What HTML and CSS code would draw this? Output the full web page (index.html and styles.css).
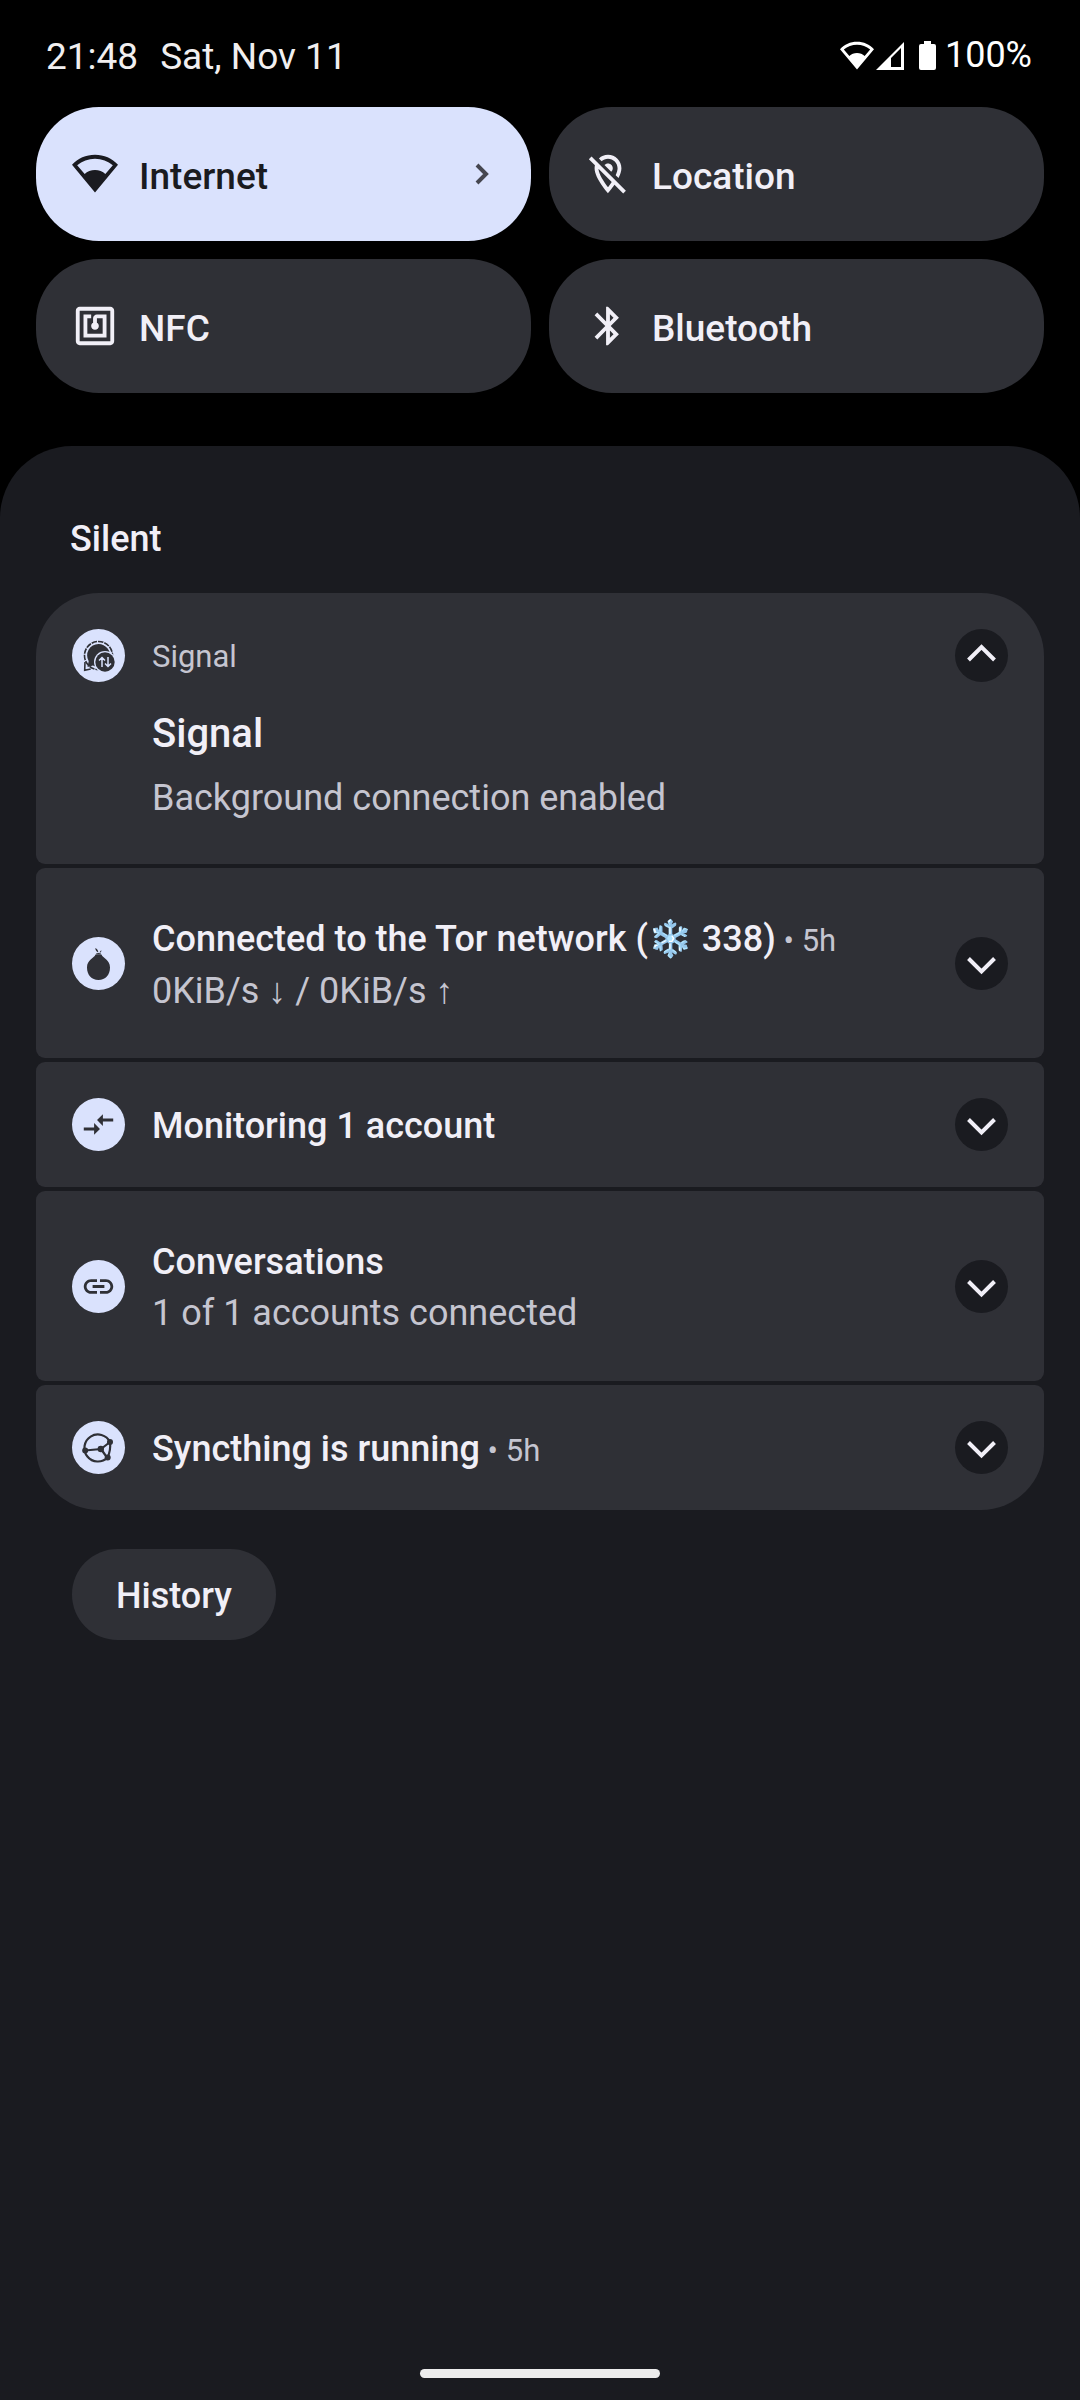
FILE: index.html
```html
<!DOCTYPE html>
<html lang="en">
<head>
<meta charset="utf-8">
<meta name="viewport" content="width=device-width, initial-scale=1">
<title>Notifications</title>
<link rel="stylesheet" href="styles.css">
</head>
<body>
<svg class="defs" aria-hidden="true">
  <symbol id="wifi" viewBox="0 0 24 24"><path fill-rule="evenodd" d="M12 2C7.3 2 3.1 3.9 0 7.2l12 14.4L24 7.200C20.900 3.900 16.700 2 12 2zM2.700 7.400C5.300 5.300 8.500 4.100 12 4.100s6.700 1.200 9.300 3.300l-3.900 4.600C16 10.600 14.100 9.900 12 9.900s-4 .7-5.400 2.100z"/></symbol>
  <symbol id="down" viewBox="0 0 53 53"><path d="M13.500 21.500l13 13 13-13" fill="none" stroke="currentColor" stroke-width="4"/></symbol>
</svg>

<header class="status">
  <div class="when"><time>21:48</time><span>Sat, Nov 11</span></div>
  <div class="signals">
    <svg class="status-wifi" aria-label="Wi-Fi"><use href="#wifi"/></svg>
    <svg class="status-cell" viewBox="0 0 28 28" aria-label="Mobile signal"><path fill-rule="evenodd" d="M0 28L28 0v28zM15 16v9h10V6z"/></svg>
    <svg class="status-battery" viewBox="0 0 17 29" aria-label="Battery"><path d="M5 0h7v3h3a2 2 0 0 1 2 2v22a2 2 0 0 1-2 2H2a2 2 0 0 1-2-2V5a2 2 0 0 1 2-2h3z"/></svg>
    <span>100%</span>
  </div>
</header>

<section class="tiles" aria-label="Quick settings">
  <button class="tile tile-on" type="button">
    <svg class="tile-icon"><use href="#wifi"/></svg>
    <span class="tile-label">Internet</span>
    <svg class="tile-chevron" viewBox="0 0 14 22"><path d="M2 2l9 9-9 9" fill="none" stroke="currentColor" stroke-width="4"/></svg>
  </button>
  <button class="tile" type="button">
    <svg class="tile-icon" viewBox="0 0 24 24"><path d="M12 4c2.760 0 5 2.240 5 5 0 1.060-.39 2.320-1 3.620l1.490 1.490C18.370 12.360 19 10.570 19 9c0-3.870-3.130-7-7-7-1.840 0-3.500.71-4.750 1.860l1.430 1.430C9.560 4.500 10.720 4 12 4zM14.500 9c0-1.380-1.120-2.500-2.500-2.500-.74 0-1.390.33-1.850.83l3.520 3.520c.51-.46.83-1.110.83-1.850zM3.410 2.860L2 4.270l3.180 3.180C5.070 7.950 5 8.470 5 9c0 5.250 7 13 7 13s1.670-1.850 3.380-4.350l4.550 4.550 1.410-1.410zM12 18.880c-2.010-2.580-4.800-6.740-4.980-9.590l6.920 6.920c-.65.98-1.330 1.890-1.940 2.670z"/></svg>
    <span class="tile-label">Location</span>
  </button>
  <button class="tile" type="button">
    <svg class="tile-icon" viewBox="0 0 24 24"><path d="M20 2H4c-1.100 0-2 .9-2 2v16c0 1.100.9 2 2 2h16c1.100 0 2-.9 2-2V4c0-1.100-.9-2-2-2zm0 18H4V4h16v16zM18 6h-5c-1.100 0-2 .9-2 2v2.280c-.6.35-1 .98-1 1.720 0 1.100.9 2 2 2s2-.9 2-2c0-.74-.4-1.380-1-1.720V8h3v8H8V8h2V6H6v12h12V6z"/></svg>
    <span class="tile-label">NFC</span>
  </button>
  <button class="tile" type="button">
    <svg class="tile-icon" viewBox="0 0 24 24"><path d="M17.710 7.710L12 2h-1v7.590L6.410 5 5 6.410 10.590 12 5 17.590 6.410 19 11 14.410V22h1l5.710-5.710-4.300-4.290 4.300-4.290zM13 5.830l1.880 1.880L13 9.590V5.830zm1.880 10.460L13 18.170v-3.760l1.880 1.880z"/></svg>
    <span class="tile-label">Bluetooth</span>
  </button>
</section>

<main class="sheet">
  <h1 class="section-title">Silent</h1>
  <div class="cards">
    <article class="card card-open">
      <svg class="badge" viewBox="0 0 53 53">
        <circle cx="26.500" cy="26.500" r="14" fill="none" stroke="currentColor" stroke-width="1.600" stroke-dasharray="5.500 1"/>
        <path d="M13 33l-.3 8.200 6-1.200" fill="none" stroke="currentColor" stroke-width="1.600"/>
        <path d="M26.500 15a11.500 11.500 0 1 1-5.600 21.500l-5.400 1.400 1.200-5.600A11.500 11.500 0 0 1 26.500 15z"/>
        <circle class="badge-cut" cx="33" cy="33" r="11"/>
        <circle cx="33" cy="33" r="9.700"/>
        <path class="badge-line" d="M30 38V28.500M27 31.500l3-3 3 3M36 28v9.500M33 34.500l3 3 3-3"/>
      </svg>
      <span class="app-name">Signal</span>
      <button class="expand" type="button" aria-label="Collapse"><svg viewBox="0 0 53 53"><path d="M13.500 31l13-13 13 13" fill="none" stroke="currentColor" stroke-width="4"/></svg></button>
      <div class="card-body">
        <h2 class="big-title">Signal</h2>
        <p class="text">Background connection enabled</p>
      </div>
    </article>

    <article class="card card-tall">
      <svg class="badge" viewBox="0 0 53 53"><path d="M23.500 17.500h6c1.500 4 8.500 5 8.500 13 0 7.500-4.500 12.500-11.500 12.500S15 38 15 30.500c0-8 7-9 8.500-13zM24 16.500c1.500-.8 3.500-.8 5 0l-.3.700h-4.400zM23.300 11c1.800.8 3 2.300 3 4.500-1.800-.6-3-2.300-3-4.500zM29.300 13l-1.900 2.500 1.700-.3z"/></svg>
      <div class="card-text">
        <h2 class="title">Connected to the Tor network (❄️ 338)<span class="age"> • 5h</span></h2>
        <p class="text">0KiB/s ↓ / 0KiB/s ↑</p>
      </div>
      <button class="expand" type="button" aria-label="Expand"><svg><use href="#down"/></svg></button>
    </article>

    <article class="card">
      <svg class="badge" viewBox="-6 -6 36 36"><path d="M9.010 14H2v2h7.010v3L13 15l-3.990-4v3zm5.980-1v-3H22V8h-7.010V5L11 9l3.990 4z"/></svg>
      <div class="card-text"><h2 class="title">Monitoring 1 account</h2></div>
      <button class="expand" type="button" aria-label="Expand"><svg><use href="#down"/></svg></button>
    </article>

    <article class="card card-tall">
      <svg class="badge" viewBox="-6 -6 36 36"><path d="M3.900 12c0-1.710 1.390-3.100 3.100-3.100h4V7H7c-2.760 0-5 2.240-5 5s2.240 5 5 5h4v-1.900H7c-1.710 0-3.100-1.390-3.100-3.100zM8 13h8v-2H8v2zm9-6h-4v1.900h4c1.710 0 3.100 1.390 3.100 3.100s-1.390 3.100-3.100 3.100h-4V17h4c2.760 0 5-2.240 5-5s-2.240-5-5-5z"/></svg>
      <div class="card-text">
        <h2 class="title">Conversations</h2>
        <p class="text">1 of 1 accounts connected</p>
      </div>
      <button class="expand" type="button" aria-label="Expand"><svg><use href="#down"/></svg></button>
    </article>

    <article class="card">
      <svg class="badge" viewBox="0 0 53 53">
        <path d="M38 21A13.500 13.500 0 1 0 35.500 36.500 28 28 0 0 0 38 21M13 29.500l16-1.500 9-7M29 28l6 8.500" fill="none" stroke="currentColor" stroke-width="2.200"/>
        <circle cx="13.200" cy="29.500" r="3"/><circle cx="38" cy="21" r="3"/><circle cx="35.700" cy="36.500" r="3"/><circle cx="28.800" cy="28" r="3.200"/>
      </svg>
      <div class="card-text"><h2 class="title">Syncthing is running<span class="age"> • 5h</span></h2></div>
      <button class="expand" type="button" aria-label="Expand"><svg><use href="#down"/></svg></button>
    </article>
  </div>
  <button class="history" type="button">History</button>
  <div class="nav-handle"></div>
</main>
</body>
</html>
```
FILE: styles.css
```css
* {
  box-sizing: border-box;
}

body {
  margin: 0;
  min-height: 100vh;
  display: flex;
  flex-direction: column;
  background: #000;
  color: #f1eff7;
  font-family: Roboto, sans-serif;
  font-size: 36px;
  line-height: 51px;
}

h1, h2, p {
  margin: 0;
  font-size: inherit;
}

button {
  border: 0;
  padding: 0;
  color: inherit;
  font: inherit;
  cursor: pointer;
}

svg {
  flex: none;
  fill: currentColor;
}

.defs {
  display: none;
}

.status {
  display: flex;
  justify-content: space-between;
  align-items: center;
  padding: 29px 48px 25px 46px;
  color: #f1eff0;
}

.when {
  display: flex;
  gap: 22px;
  padding-top: 2px;
  font-size: 37px;
}

.signals {
  display: flex;
  align-items: center;
  color: #fff;
}

.status-wifi {
  width: 34px;
  height: 34px;
  margin-right: 2px;
}

.status-cell {
  width: 28px;
  height: 28px;
  margin-right: 15px;
}

.status-battery {
  width: 17px;
  height: 29px;
  margin-right: 9px;
}

.tiles {
  display: grid;
  grid-template-columns: 1fr 1fr;
  gap: 18px;
  padding: 0 36px;
}

.tile {
  display: flex;
  align-items: center;
  gap: 21px;
  height: 134px;
  padding: 0 42px 0 36px;
  border-radius: 63px;
  background: #2f3036;
  font-size: 37px;
  font-weight: 500;
  text-align: left;
}

.tile-on {
  background: #dae2fd;
  color: #1a1b20;
}

.tile-icon {
  width: 46px;
  height: 46px;
}

.tile-label {
  flex: 1;
  padding-top: 4px;
}

.tile-chevron {
  width: 14px;
  height: 22px;
  color: #45464f;
}

.sheet {
  flex: 1;
  display: flex;
  flex-direction: column;
  margin-top: 53px;
  padding: 68px 36px 22px;
  border-radius: 72px 72px 0 0;
  background: #1a1b20;
}

.section-title {
  padding: 0 34px 28px;
  font-weight: 500;
}

.cards {
  display: grid;
  gap: 4px;
}

.card {
  display: flex;
  align-items: center;
  min-height: 125px;
  padding: 0 36px;
  border-radius: 9px;
  background: #2f3036;
}

.card:first-child {
  border-top-left-radius: 63px;
  border-top-right-radius: 63px;
}

.card:last-child {
  border-bottom-left-radius: 63px;
  border-bottom-right-radius: 63px;
}

.card-tall {
  min-height: 190px;
}

.card-open {
  flex-wrap: wrap;
  padding: 36px 36px 40px;
}

.badge {
  width: 53px;
  height: 53px;
  margin-right: 27px;
  border-radius: 50%;
  background: #dae2fd;
  color: #2f3036;
}

.badge-cut {
  fill: #dae2fd;
}

.badge-line {
  fill: none;
  stroke: #dae2fd;
  stroke-width: 1.5;
}

.app-name {
  flex: 1;
  padding-top: 2px;
  color: #c5c5d0;
  font-size: 31px;
}

.card-body {
  flex-basis: 100%;
  padding: 26px 0 0 80px;
}

.big-title {
  padding-bottom: 14px;
  font-size: 40px;
  font-weight: 500;
}

.card-text {
  flex: 1;
  padding-top: 4px;
}

.title {
  font-weight: 500;
}

.age {
  color: #c5c5d0;
  font-size: 31px;
  font-weight: 400;
}

.text {
  color: #c5c5d0;
}

.expand {
  width: 53px;
  height: 53px;
  border-radius: 50%;
  background: #1a1b20;
}

.expand svg {
  display: block;
  width: 53px;
  height: 53px;
}

.history {
  align-self: flex-start;
  height: 91px;
  margin: 39px 36px;
  padding: 4px 44px 0;
  border-radius: 46px;
  background: #2f3036;
  font-weight: 500;
}

.nav-handle {
  align-self: center;
  width: 240px;
  height: 9px;
  margin-top: auto;
  border-radius: 5px;
  background: #ececec;
}
```
